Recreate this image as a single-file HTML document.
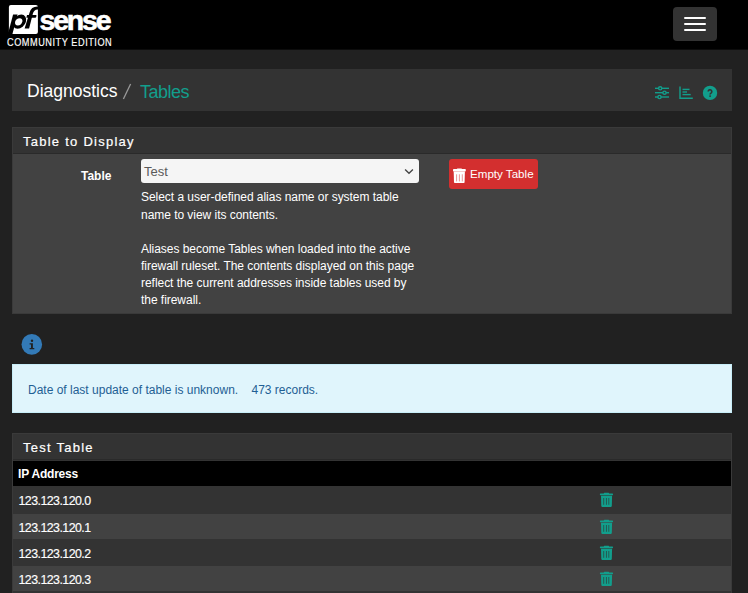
<!DOCTYPE html>
<html><head><meta charset="utf-8">
<style>
*{box-sizing:border-box;margin:0;padding:0}
html,body{width:748px;height:593px;overflow:hidden}
body{background:#212121;font-family:"Liberation Sans",sans-serif;color:#fff;position:relative}
.abs{position:absolute;white-space:nowrap}
#nav{left:0;top:0;width:748px;height:50px;background:#000;border-bottom:1px solid #0c0c0c}
#pfbox{left:9px;top:5px;width:29px;height:29px;background:#fff;border-radius:2px}
#pf{left:11px;top:3px;font-size:29px;line-height:34px;font-weight:bold;font-style:italic;color:#000;letter-spacing:-1.5px}
#sense{left:39.5px;top:3px;font-size:28.5px;line-height:34px;font-weight:bold;color:#fff;letter-spacing:-2.2px;-webkit-text-stroke:0.6px #fff}
#ce{left:7.2px;top:37.5px;font-size:10.2px;line-height:10px;color:#fff;letter-spacing:0.6px;-webkit-text-stroke:0.15px #fff;transform:scaleX(0.9);transform-origin:0 0}
#burger{left:673px;top:7px;width:44px;height:34px;background:#333;border-radius:4px}
.bar{position:absolute;left:11px;width:22px;height:2px;background:#fff;border-radius:1px}
#bc{left:12px;top:69px;width:720px;height:42px;background:#333}
.t{line-height:1}
#diag{left:27px;top:83px;font-size:17.5px}
#slash{left:123px;top:83px;font-size:17.5px;color:#999}
#tables{left:140px;top:82.5px;font-size:18px;letter-spacing:-0.5px;color:#129e8c}
.panel{position:absolute;left:12px;width:720px;border:1px solid #3a3a3a;background:#424242}
.ph{height:26px;background:#333;border-bottom:1px solid #2a2a2a;font-size:13px;line-height:14px;padding:6.6px 0 0 10px;letter-spacing:1.25px;-webkit-text-stroke:0.2px #fff}
#p1{top:127px;height:187px}
#lbl{left:81px;top:170px;font-size:12px;line-height:12px;font-weight:bold}
#sel{left:141px;top:159px;width:278px;height:24px;background:#f5f5f5;border-radius:3px;color:#5a5a5a;font-size:13px;line-height:13px;padding:6px 0 0 3px}
#help{left:141px;top:189.4px;letter-spacing:-0.04px;font-size:12px;line-height:17.14px;color:#fff;white-space:nowrap}
#btn{left:449px;top:159px;width:89px;height:30px;background:#d32f2f;border-radius:3px}
#btnt{left:470px;top:168.3px;font-size:11.6px;line-height:12px}
#alert{left:12px;top:364px;width:720px;height:49px;background:#e0f5fc;border:1px solid #c8eef8}
#alertt{left:28px;top:384px;font-size:12px;line-height:12px;color:#1f5f94}
#p2{top:433px;height:170px;background:#333}
#thead{position:absolute;left:0;top:27px;width:718px;height:25px;background:#000}
.row{position:absolute;left:0;width:718px}
.d{background:#333}.l{background:#424242}
.txt{font-size:12.4px;line-height:12px;letter-spacing:-0.55px;-webkit-text-stroke:0.15px #fff}
</style></head><body>
<div id="nav" class="abs"></div>
<svg class="abs" style="left:0;top:0" width="40" height="40" viewBox="0 0 40 40">
 <rect x="8.9" y="5" width="29" height="29" rx="2" fill="#fff"/>
 <path d="M13.1,14.6 L17.6,14.6 L12.3,34.5 L7.8,34.5 Z" fill="#000"/>
 <g transform="translate(19.45,21.7) skewX(-15)"><ellipse cx="0" cy="0" rx="6.45" ry="7.1" fill="#000"/><ellipse cx="-0.7" cy="0.1" rx="3.6" ry="3.65" fill="#fff"/></g>
 <path d="M24.6,28.6 L29.1,28.6 L32.9,13.5 Q33.8,9.6 37.5,9.4 L40,9.4 L40,6.5 L37.5,6.5 Q31,6.6 29.6,12.5 Z" fill="#000"/>
 <path d="M27,14.9 L35.8,14.9 Q36.7,14.9 36.5,15.8 L36.2,17 Q36,17.7 35.2,17.7 L26.4,17.7 Z" fill="#000"/>
 <rect x="0" y="34" width="40" height="6" fill="#000"/>
</svg>
<div id="sense" class="abs">sense</div>
<div id="ce" class="abs">COMMUNITY EDITION</div>
<div id="burger" class="abs"><div class="bar" style="top:10px"></div><div class="bar" style="top:16px"></div><div class="bar" style="top:22px"></div></div>

<div id="bc" class="abs"></div>
<div id="diag" class="abs t">Diagnostics</div>
<svg class="abs" style="left:120px;top:82px" width="14" height="20"><line x1="10.6" y1="2" x2="3.4" y2="17" stroke="#9a9a9a" stroke-width="1.3"/></svg>
<div id="tables" class="abs t">Tables</div>
<svg class="abs" style="left:650px;top:82px" width="72" height="22" viewBox="650 82 72 22">
 <g stroke="#129e8c" stroke-width="1.4" fill="none">
  <line x1="655" y1="88.3" x2="669" y2="88.3"/>
  <line x1="655" y1="92.7" x2="669" y2="92.7"/>
  <line x1="655" y1="97" x2="669" y2="97"/>
  <circle cx="660.2" cy="88.3" r="1.6" fill="#333"/>
  <circle cx="664.5" cy="92.7" r="1.6" fill="#333"/>
  <circle cx="659.5" cy="97" r="1.6" fill="#333"/>
  <polyline points="680,86.5 680,98.3 692.8,98.3"/>
  <line x1="682.5" y1="89.4" x2="689.5" y2="89.4"/>
  <line x1="682.5" y1="92" x2="687" y2="92"/>
  <line x1="682.5" y1="94.6" x2="690.7" y2="94.6"/>
 </g>
 <circle cx="710" cy="92.9" r="7.2" fill="#129e8c"/>
 <path d="M708.2,91.6 A1.8,1.8 0 1 1 711,93.1 Q710.1,93.6 710.1,94.5" stroke="#333" stroke-width="1.6" fill="none"/><circle cx="710.1" cy="96.1" r="0.95" fill="#333"/>
</svg>

<div id="p1" class="panel"><div class="ph">Table to Display</div></div>
<div id="lbl" class="abs">Table</div>
<div id="sel" class="abs">Test</div>
<svg class="abs" style="left:403px;top:166px" width="12" height="10" viewBox="0 0 12 10"><polyline points="2.1,3.6 6,7.3 9.9,3.6" stroke="#444" stroke-width="1.35" fill="none"/></svg>
<div id="help" class="abs">Select a user-defined alias name or system table<br>name to view its contents.<br><br>Aliases become Tables when loaded into the active<br>firewall ruleset. The contents displayed on this page<br>reflect the current addresses inside tables used by<br>the firewall.</div>
<div id="btn" class="abs"></div>
<svg class="abs" style="left:452px;top:167.5px" width="15" height="17" viewBox="0 0 15 17">
 <rect x="1" y="1.1" width="12.8" height="2.3" rx="0.7" fill="#fff"/>
 <rect x="4.8" y="0.6" width="5.2" height="1.6" rx="0.7" fill="#fff"/>
 <path d="M1.7 3.4 H12.9 L12.6 14.3 Q12.55 15.1 11.8 15.1 H2.8 Q2.05 15.1 2 14.3 Z" fill="#fff"/>
 <g stroke="#e58a8a" stroke-width="0.9"><line x1="4.6" y1="6.3" x2="4.6" y2="13.4"/><line x1="7.4" y1="6.3" x2="7.4" y2="13.4"/><line x1="10.3" y1="6.3" x2="10.3" y2="13.4"/></g>
</svg>
<div id="btnt" class="abs">Empty Table</div>

<svg class="abs" style="left:21px;top:334px" width="22" height="22" viewBox="0 0 22 22">
 <circle cx="10.8" cy="10.4" r="10.3" fill="#337ab7"/>
 <circle cx="11" cy="6.8" r="1.2" fill="#212121"/>
 <path d="M8.6 9.2 H11.9 V14 H13.3 V15.3 H8.6 V14 H10 V10.5 H8.6 Z" fill="#212121"/>
</svg>
<div id="alert" class="abs"></div>
<div id="alertt" class="abs">Date of last update of table is unknown.&nbsp;&nbsp;&nbsp; 473 records.</div>

<div id="p2" class="panel"><div class="ph">Test Table</div>
<div id="thead"></div>
<div class="row d" style="top:52px;height:27.5px"></div>
<div class="row l" style="top:79.5px;height:25.5px"></div>
<div class="row d" style="top:105px;height:26.5px"></div>
<div class="row l" style="top:131.5px;height:25.5px"></div>
<div class="row d" style="top:157px;height:20px"></div>
</div>
<div class="abs" style="left:18px;top:468px;font-size:12px;line-height:12px;font-weight:bold;letter-spacing:-0.2px">IP Address</div>
<div class="abs txt" style="left:18.5px;top:495px">123.123.120.0</div>
<div class="abs txt" style="left:18.5px;top:522px">123.123.120.1</div>
<div class="abs txt" style="left:18.5px;top:548px">123.123.120.2</div>
<div class="abs txt" style="left:18.5px;top:574px">123.123.120.3</div>
<svg width="0" height="0" style="position:absolute"><defs>
 <g id="tr"><g transform="translate(0.5,0.5)">
  <rect x="0.4" y="0.9" width="13.1" height="1.8" rx="0.6" fill="#129e8c"/>
  <rect x="4.3" y="0.3" width="5.3" height="1.4" rx="0.6" fill="#129e8c"/>
  <path d="M1.5 3.2 H12.6 L12.3 13.6 Q12.25 14.4 11.5 14.4 H2.6 Q1.85 14.4 1.8 13.6 Z" fill="#129e8c"/>
  <g stroke="#245a52" stroke-width="1"><line x1="4.2" y1="5.5" x2="4.2" y2="12.3"/><line x1="6.95" y1="5.5" x2="6.95" y2="12.3"/><line x1="9.3" y1="5.5" x2="9.3" y2="12.3"/></g>
 </g></g></defs></svg>
<svg class="abs" style="left:599px;top:492px" width="16" height="17"><use href="#tr"/></svg>
<svg class="abs" style="left:599px;top:519px" width="16" height="17"><use href="#tr"/></svg>
<svg class="abs" style="left:599px;top:545px" width="16" height="17"><use href="#tr"/></svg>
<svg class="abs" style="left:599px;top:571px" width="16" height="17"><use href="#tr"/></svg>
</body></html>
